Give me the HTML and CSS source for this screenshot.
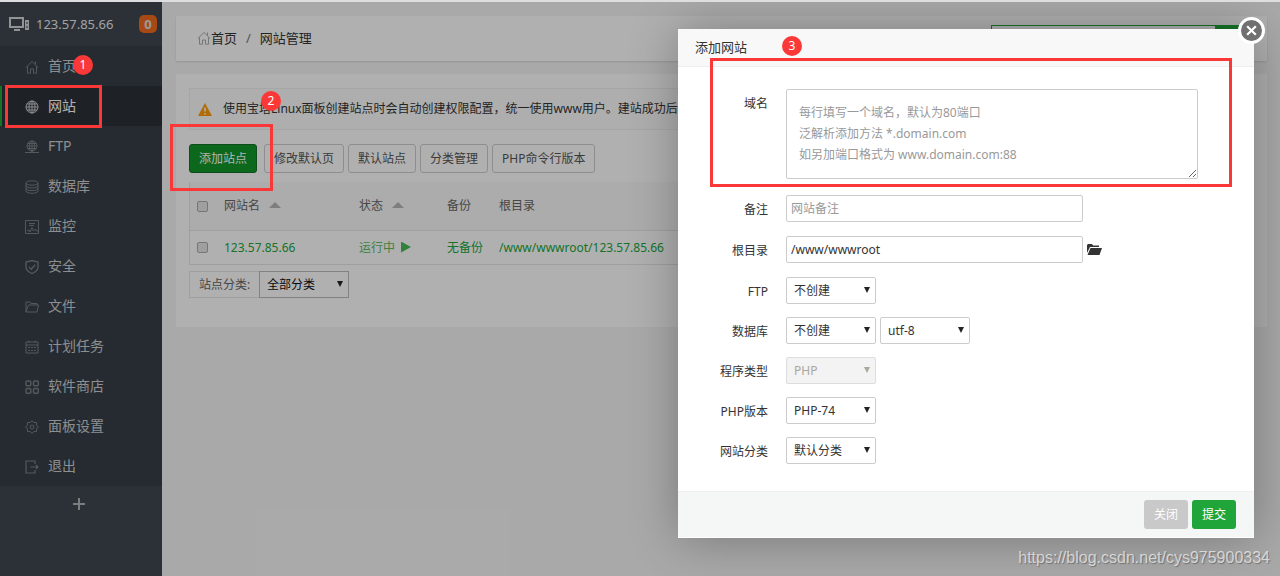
FILE: index.html
```html
<!DOCTYPE html>
<html lang="zh-CN">
<head>
<meta charset="utf-8">
<title>网站管理</title>
<link rel="stylesheet" href="styles.css">
</head>
<body>
<div class="app">
  <aside class="sidebar">
    <div class="server">
      <svg class="server-icon" viewBox="0 0 21 16" fill="none" stroke="#d0d3d6" stroke-width="2"><path d="M1 2h13v9H1zM5 14h6"/><path d="M16 4h4v10h-4z" fill="#d0d3d6" stroke="none"/><path d="M17 7h2M17 11h2" stroke="#3c444d" stroke-width="1"/></svg>
      <span class="server-ip">123.57.85.66</span>
      <span class="msg-count">0</span>
    </div>
    <nav class="menu">
      <a class="menu-item" href="#"><svg viewBox="0 0 14 14"><path d="M.8 7.6 7 1.5l6.2 6.100M2.500 6.500v6.700h3V9h3v4.200h3V6.500M10.500 1.500v3"/></svg>首页</a>
      <a class="menu-item active" href="#"><svg viewBox="0 0 14 14"><circle cx="7" cy="7" r="6"/><ellipse cx="7" cy="7" rx="3" ry="6"/><path d="M7 1v12M1 7h12M1.800 4h10.400M1.800 10h10.400"/></svg>网站</a>
      <a class="menu-item" href="#"><svg viewBox="0 0 14 14"><circle cx="7" cy="6" r="5"/><ellipse cx="7" cy="6" rx="2.500" ry="5"/><path d="M7 1v12M2 6h10M2.800 3.500h8.400M2.800 8.500h8.400M0 12.500h14M5 12.500h4"/></svg>FTP</a>
      <a class="menu-item" href="#"><svg viewBox="0 0 14 14"><ellipse cx="7" cy="3" rx="6" ry="2.200"/><path d="M1 3v8c0 3 12 3 12 0V3M1 5.700c0 3 12 3 12 0M1 8.400c0 3 12 3 12 0"/></svg>数据库</a>
      <a class="menu-item" href="#"><svg viewBox="0 0 14 14"><path d="M.5.500h13v13H.5zM4 3.500h6M4 5.500h5M2 11l2-1 1 2 2-4.500L8.500 11l2-2 1 2H13"/></svg>监控</a>
      <a class="menu-item" href="#"><svg viewBox="0 0 14 14"><path d="M7 .500 13 2v5.300c0 3-3 5-6 6.200-3-1.200-6-3.200-6-6.200V2zM4 7l2.300 2.200L10.300 4.700" stroke-width="1.300"/></svg>安全</a>
      <a class="menu-item" href="#"><svg viewBox="0 0 14 14"><path d="M1 12V2h4l1 1.500h6V5M1 12 3.500 5h10L12 12z"/></svg>文件</a>
      <a class="menu-item" href="#"><svg viewBox="0 0 14 14"><path d="M1 2h12v11H1zM1 5h12M4 .500V3M10 .500V3M3 7.500h2M6 7.500h2M9 7.500h2M3 10.500h2M6 10.500h2M9 10.500h2"/></svg>计划任务</a>
      <a class="menu-item" href="#"><svg viewBox="0 0 14 14" stroke-width="1.400"><rect x="1" y="1" width="4.800" height="4.800" rx="1"/><rect x="8.500" y="1" width="4.800" height="4.800" rx="1"/><rect x="1" y="8.500" width="4.800" height="4.800" rx="1"/><rect x="8.500" y="8.500" width="4.800" height="4.800" rx="1"/></svg>软件商店</a>
      <a class="menu-item" href="#"><svg viewBox="0 0 14 14"><circle cx="7" cy="7" r="2"/><path d="M7 .600 8.600 2.400 11.500 2.500 11.600 5.400 13.400 7 11.600 8.600 11.500 11.500 8.600 11.600 7 13.400 5.400 11.600 2.500 11.500 2.400 8.600.600 7 2.400 5.400 2.500 2.500 5.400 2.400z"/></svg>面板设置</a>
      <a class="menu-item" href="#"><svg viewBox="0 0 14 14"><path d="M10 4V1H1v12h9v-3M5.500 7H13M11 5l2 2-2 2" stroke-width="1.200"/></svg>退出</a>
    </nav>
    <button class="menu-add" type="button" aria-label="添加"><svg viewBox="0 0 12 12"><path d="M6 0v12M0 6h12"/></svg></button>
  </aside>

  <main class="main">
    <header class="card crumbs">
      <svg class="crumb-icon" viewBox="0 0 14 14"><path d="M.8 7.600 7 1.500l6.200 6.100M2.500 6.500v6.700h3V9h3v4.200h3V6.500M10.500 1.500v3"/></svg>
      <a href="#">首页</a><span class="slash">/</span><span>网站管理</span>
      <form class="search"><input type="text" aria-label="搜索"><button type="button" aria-label="搜索"></button></form>
    </header>

    <section class="card content">
      <div class="notice">
        <svg viewBox="0 0 14 13"><path d="M7 0 14 13H0z" fill="#ff9b0a"/><path d="M7 4.500v4M7 10v1.500" stroke="#fff" stroke-width="1.500"/></svg>
        <span>使用宝塔Linux面板创建站点时会自动创建权限配置，统一使用www用户。建站成功后</span>
      </div>
      <div class="toolbar">
        <button class="btn btn-add" type="button">添加站点</button>
        <button class="btn" type="button">修改默认页</button>
        <button class="btn" type="button">默认站点</button>
        <button class="btn" type="button">分类管理</button>
        <button class="btn" type="button">PHP命令行版本</button>
      </div>
      <table class="sites">
        <thead>
          <tr><th class="c-check"><input type="checkbox" aria-label="全选"></th><th class="c-name">网站名<i class="sort"></i></th><th class="c-state">状态<i class="sort"></i></th><th class="c-backup">备份</th><th>根目录</th></tr>
        </thead>
        <tbody>
          <tr><td><input type="checkbox" aria-label="选择 123.57.85.66"></td><td><a href="#">123.57.85.66</a></td><td><a class="running" href="#">运行中<i class="play"></i></a></td><td><a href="#">无备份</a></td><td><a href="#">/www/wwwroot/123.57.85.66</a></td></tr>
        </tbody>
      </table>
      <div class="filter">
        <label for="site-type">站点分类:</label>
        <span class="select"><select id="site-type"><option>全部分类</option></select></span>
      </div>
    </section>
  </main>
  <div class="shade"></div>
</div>

<div class="dialog" role="dialog" aria-labelledby="dialog-title">
  <h2 class="dialog-title" id="dialog-title">添加网站</h2>
  <button class="dialog-close" type="button" aria-label="关闭窗口"><svg viewBox="0 0 12 12"><path d="m2 2 8 8M10 2l-8 8"/></svg></button>
  <form class="form">
    <div class="row row-area"><label for="domain">域名</label><textarea id="domain" placeholder="每行填写一个域名，默认为80端口&#10;泛解析添加方法 *.domain.com&#10;如另加端口格式为 www.domain.com:88"></textarea></div>
    <div class="row row-text"><label for="note">备注</label><input id="note" type="text" placeholder="网站备注"></div>
    <div class="row row-text"><label for="path">根目录</label><input id="path" type="text" value="/www/wwwroot"><svg class="folder" viewBox="0 0 15 11"><path d="M0 9V1l1-1h4l1 1.500h6V3H3z"/><path d="M3.500 4H15l-2.500 7H.5z"/></svg></div>
    <div class="row"><label for="ftp">FTP</label><span class="select"><select id="ftp"><option>不创建</option></select></span></div>
    <div class="row"><label for="db">数据库</label><span class="select"><select id="db"><option>不创建</option></select></span><span class="select"><select aria-label="编码"><option>utf-8</option></select></span></div>
    <div class="row"><label for="kind">程序类型</label><span class="select is-disabled"><select id="kind" disabled><option>PHP</option></select></span></div>
    <div class="row"><label for="version">PHP版本</label><span class="select"><select id="version"><option>PHP-74</option></select></span></div>
    <div class="row"><label for="category">网站分类</label><span class="select"><select id="category"><option>默认分类</option></select></span></div>
  </form>
  <div class="dialog-foot">
    <button class="foot-btn" type="button">关闭</button>
    <button class="foot-btn submit" type="button">提交</button>
  </div>
</div>

<div class="mark-box mark-menu"></div><span class="mark-dot dot-1">1</span>
<div class="mark-box mark-add"></div><span class="mark-dot dot-2">2</span>
<div class="mark-box mark-domain"></div><span class="mark-dot dot-3">3</span>
<span class="watermark">https://blog.csdn.net/cys975900334</span>
</body>
</html>
```
FILE: styles.css
```css
* { box-sizing: border-box; }
body {
  margin: 0;
  min-height: 100vh;
  position: relative;
  display: flex;
  overflow: hidden;
  border-top: 2px solid #dcdedf;
  background: #f3f3f3;
  color: #333;
  font: 12px/18px "Noto Sans", "Noto Sans CJK SC", sans-serif;
}
a { color: inherit; text-decoration: none; }
button, input, select, textarea { font: inherit; color: inherit; margin: 0; }
svg { flex: none; }

.app { flex: 1; display: flex; position: relative; min-width: 0; }
.shade { position: absolute; inset: 0; background: rgba(0, 0, 0, .3); }

/* sidebar */
.sidebar { width: 162px; flex: none; background: #3f4650; }
.server { display: flex; align-items: center; height: 44px; padding: 0 5px 0 9px; color: #e6e8ea; font-size: 13px; }
.server-icon { width: 21px; height: 16px; margin-right: 6px; }
.server-ip { flex: 1; }
.msg-count { width: 18px; height: 18px; border-radius: 5px; background: #f0691f; color: #ddd; font-weight: bold; text-align: center; }
.menu-item { display: flex; align-items: center; height: 40px; padding-left: 23px; border-left: 2px solid #3a3e42; background: #373e47; color: #c9cccf; font-size: 14px; }
.menu-item svg { width: 14px; height: 14px; margin-right: 9px; position: relative; top: 1px; fill: none; stroke: #7a8085; }
.menu-item.active { background: #2c3138; border-left-color: #20a53a; color: #fff; }
.menu-item.active svg { stroke: #c8cbce; }
.menu-add { display: flex; justify-content: center; width: 100%; padding: 12px 5px 0 0; border: 0; background: none; }
.menu-add svg { width: 12px; height: 12px; stroke: #b0b3b6; stroke-width: 2; }

/* page */
.main { flex: 1; min-width: 0; padding: 14px 13px 0 14px; }
.card { background: #fdfdfd; box-shadow: 0 1px 2px rgba(0, 0, 0, .12); }
.crumbs { display: flex; align-items: center; height: 45px; padding: 0 15px 2px 21px; font-size: 13px; }
.crumb-icon { width: 14px; height: 14px; fill: none; stroke: #aaa; }
.slash { margin: 0 8px; padding: 0 1px; color: #777; }
.search { display: flex; margin-left: auto; }
.search input { width: 225px; height: 26px; border: 1px solid #20a53a; background: #fff; }
.search button { width: 36px; border: 0; background: #20a53a; }
.content { margin-top: 13px; padding: 14px 13px 29px; box-shadow: none; }
.notice { display: flex; align-items: center; height: 42px; padding-left: 8px; border: 1px solid #eee; background: #fafafa; white-space: nowrap; overflow: hidden; }
.notice svg { width: 14px; height: 13px; margin-right: 11px; }
.toolbar { display: flex; gap: 4px; margin: 14px 0 9px; }
.btn { height: 29px; padding: 0 9px; border: 1px solid #ccc; border-radius: 3px; background: #fdfdfd; color: #555; }
.btn-add { margin-right: 3px; border-color: #1a6c2a; background: #10952a; color: #fff; }

.sites { width: 100%; table-layout: fixed; border-collapse: separate; border-spacing: 0; border: 1px solid #e4e4e4; border-width: 0 1px; }
.sites th { height: 49px; padding: 0; border-bottom: 1px solid #e4e4e4; background: #f6f6f6; color: #666; font-weight: normal; text-align: left; }
.sites td { height: 34px; padding: 0; border-bottom: 1px solid #e4e4e4; color: #20a53a; }
.c-check { width: 34px; }
.c-name { width: 135px; }
.c-state { width: 88px; }
.c-backup { width: 52px; }
.sites input { appearance: none; display: block; width: 11px; height: 11px; margin-left: 7px; border: 1px solid #aaa; border-radius: 2px; background: #e4e4e4; }
.sort, .play { display: inline-block; background: #b5b5b5; }
.sort { width: 12px; height: 6px; margin-left: 9px; vertical-align: 2px; clip-path: polygon(50% 0, 100% 100%, 0 100%); }
.running { color: #5cb85c; }
.play { width: 10px; height: 11px; margin-left: 6px; vertical-align: -1px; background: #46b957; clip-path: polygon(0 0, 100% 50%, 0 100%); }
.filter { display: flex; margin-top: 6px; }
.filter label { width: 70px; padding: 4px 0 0 9px; border: 1px solid #e4e4e4; border-right: 0; color: #666; }
.filter .select select { border-color: #bbb; border-radius: 0; }

.select { position: relative; display: block; }
.select select { appearance: none; display: block; width: 90px; height: 27px; padding: 0 7px; border: 1px solid #ccc; border-radius: 2px; background: #fff; color: #333; }
.filter .select select { background: #fdfdfd; color: #111; }
.select::after { content: ""; position: absolute; right: 6px; top: 10px; width: 6px; height: 6px; background: #222; clip-path: polygon(0 0, 100% 0, 50% 100%); pointer-events: none; }
.is-disabled select { background: #f3f3f3; border-color: #ddd; color: #aaa79b; opacity: 1; }
.is-disabled::after { background: #aaa79b; }

/* dialog */
.dialog { position: absolute; top: 27px; right: 26px; width: 45%; min-width: 540px; border-radius: 2px; background: #fff; box-shadow: 1px 1px 50px rgba(0, 0, 0, .3); }
.dialog-title { margin: 0; padding: 9px 17px 10px; border-bottom: 1px solid #eee; background: #f8f8f8; font-size: 13px; line-height: 18px; font-weight: normal; }
.dialog-close { position: absolute; top: -12px; right: -11px; display: flex; align-items: center; justify-content: center; width: 27px; height: 27px; padding: 0; border: 3px solid #fff; border-radius: 50%; background: #707070; }
.dialog-close svg { width: 13px; height: 13px; stroke: #fff; stroke-width: 2; }
.form { display: grid; gap: 13px; padding: 22px 18px 27px 0; }
.row { display: flex; align-items: flex-start; gap: 4px; color: #333; }
.row label { width: 90px; margin-right: 14px; padding-top: 6px; text-align: right; }
.row input, .row textarea { border: 1px solid #ccc; border-radius: 2px; background: #fff; }
.row ::placeholder { color: #999; opacity: 1; }
.row-text { height: 28px; }
.row input { width: 297px; height: 27px; padding: 0 4px; }
.row textarea { width: 412px; height: 90px; padding: 12px; line-height: 21px; resize: both; overflow: hidden; }
.row-area { height: 93px; }
.folder { width: 15px; height: 11px; margin-top: 8px; fill: #333; }
.dialog-foot { display: flex; justify-content: flex-end; gap: 4px; padding: 8px 18px; border-top: 1px solid #eee; border-bottom: 1px solid #fff; background: #f5f7f7; }
.foot-btn { height: 29px; padding: 0 10px; border: 0; border-radius: 3px; background: #c9c9c9; color: #fff; }
.submit { background: #20a53a; }

/* annotations */
.mark-box { position: absolute; border: 3px solid #fb3838; }
.mark-menu { left: 5px; top: 83px; width: 97px; height: 43px; }
.mark-add { left: 170px; top: 122px; width: 103px; height: 67px; }
.mark-domain { right: 48px; top: 56px; width: 522px; height: 129px; }
.mark-dot { position: absolute; width: 20px; height: 20px; border-radius: 50%; background: #fb3838; color: #fff; line-height: 20px; text-align: center; }
.dot-1 { left: 73px; top: 53px; }
.dot-2 { left: 261px; top: 89px; }
.dot-3 { right: 478px; top: 34px; }
.watermark { position: absolute; right: 10px; bottom: 8px; color: rgba(255, 255, 255, .65); font: 16px/20px "Liberation Sans", sans-serif; text-shadow: 1px 1px 1px rgba(0, 0, 0, .3); }
```
